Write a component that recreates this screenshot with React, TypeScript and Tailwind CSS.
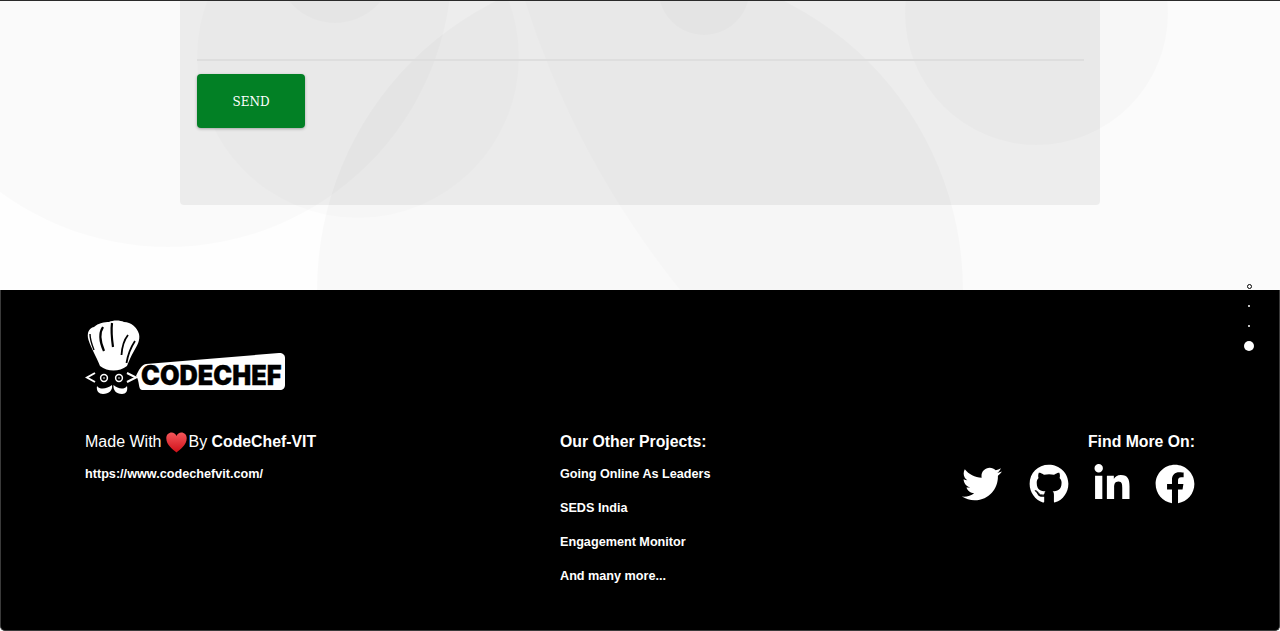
import { FaTwitter, FaGithub, FaLinkedinIn, FaFacebook } from "react-icons/fa";

const projects = ["Going Online As Leaders", "SEDS India", "Engagement Monitor", "And many more..."];

// faint blobs behind the contact card
const blobs = [
    { cx: 168, cy: -38, r: 284, o: 0.014 },
    { cx: 358, cy: 56, r: 161, o: 0.012 },
    { cx: 640, cy: 289, r: 323, o: 0.02 },
    { cx: 1375, cy: -270, r: 892, o: 0.01 },
    { cx: 1036.5, cy: 12.5, r: 131.5, o: 0.016 },
    { cx: 335, cy: -37, r: 59, o: 0.016 },
    { cx: 704, cy: -11.5, r: 45.5, o: 0.016 },
];

function Background() {
    return (
        <svg className="absolute inset-0" width="1280" height="290" viewBox="0 0 1280 290">
            {blobs.map((b) => (
                <circle key={b.cx} cx={b.cx} cy={b.cy} r={b.r} fill="#000" fillOpacity={b.o} />
            ))}
        </svg>
    );
}

function Logo() {
    return (
        <svg width="201" height="75" viewBox="85 320 201 75">
            {/* hat */}
            <path
                d="M100 366C96 356 91 348 88.5 340C86.5 333 89 328 94 327C98 323 105 322 109 322C113 320 120 320 124 322C131 322 137 327 139 334C140.5 340 137 346 134 351C131 356 129 361 127 366C119 372 108 372 100 366Z"
                fill="#fff"
            />
            <path d="M90 334C90 340 92 345 94 350" stroke="#000" strokeWidth="1.4" fill="none" />
            <path d="M103 327C99 333 100 342 104 351" stroke="#000" strokeWidth="2.2" fill="none" />
            <path d="M112 323C111 331 112 340 113 347" stroke="#000" strokeWidth="2.2" fill="none" />
            <path d="M128 335C124 340 122 347 121.5 355" stroke="#000" strokeWidth="1.8" fill="none" />
            <path d="M135 341C131 347 128 354 126.5 363" stroke="#000" strokeWidth="1.8" fill="none" />
            {/* chevrons and eyes */}
            <path d="M95 373L87 377.5L95 382" stroke="#fff" strokeWidth="2" fill="none" />
            <path d="M127 373L136 377.5L127 382" stroke="#fff" strokeWidth="2" fill="none" />
            <circle cx="104" cy="378" r="3.4" fill="none" stroke="#fff" strokeWidth="1.5" />
            <circle cx="119" cy="378" r="3.4" fill="none" stroke="#fff" strokeWidth="1.5" />
            <circle cx="104" cy="378" r="0.8" fill="#fff" />
            <circle cx="119" cy="378" r="0.8" fill="#fff" />
            {/* moustache */}
            <path d="M97 386C100 390 107 389 112 385C113 390 109 394 103 394C99 394 96 391 97 386Z" fill="#fff" />
            <path d="M127 386C124 390 118 389 113.5 385C113 390 116 394 122 394C126 394 128 391 127 386Z" fill="#fff" />
            {/* name plate */}
            <path
                d="M136 376C139 370 141 365 146 364L279 353C283 353 285 355 285 358L285 385C285 388 283 390 280 390L142 390C138 390 140 381 136 376Z"
                fill="#fff"
            />
            <text
                transform="translate(141 385) scale(1.1 1.16)"
                fill="#000"
                stroke="#000"
                strokeWidth="0.3"
                className="text-[23px] font-black font-['Inter',sans-serif]"
            >
                CODECHEF
            </text>
        </svg>
    );
}

function Heart() {
    return (
        <svg width="21" height="21" viewBox="0 0 21 21" className="ml-[5px] mr-[3px]">
            <defs>
                <linearGradient id="heart" x1="0" y1="0" x2="0" y2="1">
                    <stop offset="0" stopColor="#f4565a" />
                    <stop offset="1" stopColor="#cf1019" />
                </linearGradient>
            </defs>
            <path
                d="M10.5 20.5C7 17.5 0.3 13 0.3 6.3C0.3 2.8 2.8 0.6 5.6 0.6C7.8 0.6 9.6 2 10.5 4C11.4 2 13.2 0.6 15.4 0.6C18.2 0.6 20.7 2.8 20.7 6.3C20.7 13 14 17.5 10.5 20.5Z"
                fill="url(#heart)"
            />
        </svg>
    );
}

export default function App() {
    return (
        <div className="relative h-[631px] w-[1280px] overflow-hidden bg-[#fefefe] font-['Liberation_Sans',Arial,sans-serif]">
            <section className="relative h-[290px] border-t border-[#2a2a2a]">
                <Background />
                <div className="relative mx-auto h-[204px] w-[920px] rounded-b bg-black/[0.055] px-[17px] pt-[58px]">
                    <div className="h-[2px] w-[887px] bg-[#dedede]" />
                    <button className="mt-[13px] flex h-[54px] w-[108px] items-center justify-center rounded bg-[#028025] pt-[1px] text-[12px] font-['DejaVu_Serif',serif] text-white shadow-[0_1px_3px_rgba(0,0,0,0.3)]">
                        SEND
                    </button>
                </div>
            </section>

            <footer className="h-[341px] rounded-b-[5px] border-x border-b border-[#3a3a3a] bg-black px-[84px] pt-[30px] text-white">
                <Logo />
                <div className="mt-[37px] grid grid-cols-[475px_1fr_auto]">
                    <div>
                        <div className="flex h-[20px] items-center text-[16px]">
                            Made With
                            <Heart />
                            <span className="-ml-[2px]">By&nbsp;</span>
                            <b className="text-[15.8px]">CodeChef-VIT</b>
                        </div>
                        <div className="mt-[15px] text-[12.65px] font-bold leading-[15px]">https://www.codechefvit.com/</div>
                    </div>
                    <div>
                        <div className="h-[20px] text-[15.8px] font-bold leading-[20px]">Our Other Projects:</div>
                        <ul className="mt-[15px] flex flex-col gap-[19px] text-[12.65px] font-bold leading-[15px]">
                            {projects.map((p) => (
                                <li key={p}>{p}</li>
                            ))}
                        </ul>
                    </div>
                    <div className="flex flex-col items-end">
                        <div className="h-[20px] text-[15.8px] font-bold leading-[20px]">Find More On:</div>
                        <div className="mt-[12px] flex items-center text-[40px]">
                            <FaTwitter />
                            <FaGithub className="ml-[27px]" />
                            <FaLinkedinIn className="ml-[23px]" />
                            <FaFacebook className="ml-[23px]" />
                        </div>
                    </div>
                </div>
            </footer>

            {/* section dots */}
            <div className="absolute left-[1244px] top-[284px] flex w-[10px] flex-col items-center">
                <span className="h-[5px] w-[5px] rounded-full border-[1.5px] border-black bg-white" />
                <span className="mt-[16px] h-[2px] w-[2px] rounded-full bg-white" />
                <span className="mt-[18px] h-[2px] w-[2px] rounded-full bg-white" />
                <span className="mt-[14px] h-[10px] w-[10px] rounded-full bg-white" />
            </div>
        </div>
    );
}
